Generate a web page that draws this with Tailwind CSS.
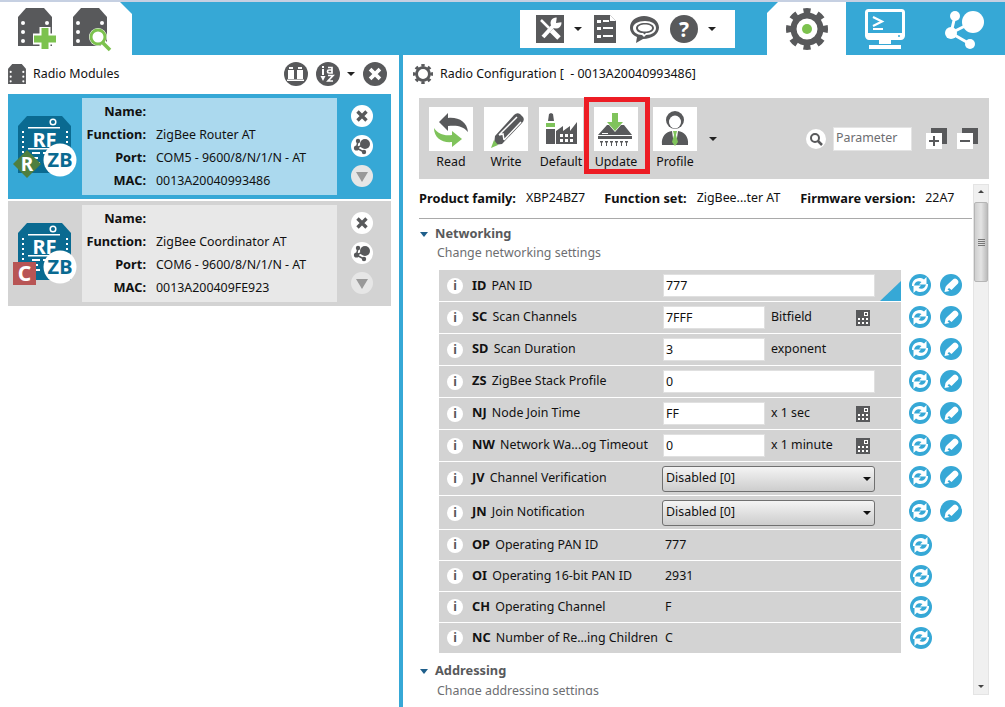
<!DOCTYPE html>
<html lang="en">
<head>
<meta charset="utf-8">
<title>Radio Configuration</title>
<script src="https://cdn.jsdelivr.net/npm/@tailwindcss/browser@4"></script>
</head>
<body class="w-[1005px] h-[707px] overflow-hidden bg-white font-['Noto_Sans',sans-serif] text-[12.4px] text-[#111] [&_b]:text-[12.8px]">
<svg class="absolute w-0 h-0" aria-hidden="true">
  <symbol id="chip" viewBox="0 0 34 38"><path fill="#58595b" d="M8 0H26L34 9V38H0V9Z"/><g fill="#fff"><circle cx="5" cy="15" r="2"/><circle cx="5" cy="24" r="2"/><circle cx="5" cy="33" r="2"/><circle cx="29" cy="15" r="2"/><circle cx="29" cy="24" r="2"/><circle cx="29" cy="33" r="2"/></g></symbol>
  <symbol id="gear" viewBox="0 0 42 42"><circle cx="21" cy="21" r="13.500" fill="none" stroke="#58595b" stroke-width="6"/><circle cx="21" cy="21" r="18" fill="none" stroke="#58595b" stroke-width="6" pathLength="16" stroke-dasharray="1 1" stroke-dashoffset="0.5"/></symbol>
  <symbol id="rf" viewBox="0 0 22 22"><circle cx="11" cy="11" r="11" fill="#36a8d6"/><g fill="#fff"><path d="M3 12C2.500 6 9.500 1.500 15 5.500L17.500 3V10.500H10L12.500 8C9 6 5.500 8 5 12Z"/><path d="M19 10C19.500 16 12.500 20.500 7 16.500L4.500 19V11.500H12L9.500 14C13 16 16.500 14 17 10Z"/></g></symbol>
  <symbol id="wr" viewBox="0 0 22 22"><circle cx="11" cy="11" r="11" fill="#36a8d6"/><path fill="#fff" d="M7 11L13.500 5Q15 4 16.500 5L18 6.500Q19 8 18 9.500L11.500 16L9 14L7.500 15.500L9.500 17L4.500 18L5.500 13Z"/></symbol>
  <symbol id="calc" viewBox="0 0 14 16"><rect width="14" height="16" fill="#58595b"/><path fill="#fff" d="M8 2h4v4H8zM2 8h2v2H2zM6 8h2v2H6zM10 8h2v2h-2zM2 12h2v2H2zM6 12h2v2H6zM10 12h2v2h-2z"/><path fill="#58595b" d="M9 3h2v2H9z"/></symbol>
  <symbol id="xmark" viewBox="0 0 22 22"><path fill="none" stroke="currentColor" stroke-width="3.400" d="M6.500 6.500L15.500 15.500M15.500 6.500L6.500 15.500"/></symbol>
  <symbol id="share" viewBox="0 0 22 22"><g fill="#58595b"><circle cx="14" cy="9" r="5"/><circle cx="7" cy="6" r="2.200"/><circle cx="5.500" cy="13" r="2.600"/><circle cx="13" cy="17" r="2.200"/></g><path fill="none" stroke="#58595b" stroke-width="1.500" d="M7 6L5.500 13L13 17M5.500 13L14 9"/></symbol>
  <symbol id="mod" viewBox="10 105 75 80"><path fill="#0a6a91" d="M27 116H62L71 126V173H18V126Z"/><circle cx="53" cy="122" r="2.800" fill="none" stroke="#fff" stroke-width="1.500"/><path fill="#fff" d="M28 127H60V128.500H28ZM28 148H60V149.500H28ZM32 152H40V154H32ZM32 157H38V159H32ZM32 162H40V164H32ZM43 152H50V154H43Z"/><g fill="#fff"><rect x="22" y="131" width="2" height="2"/><rect x="22" y="136" width="2" height="2"/><rect x="22" y="141" width="2" height="2"/><rect x="22" y="146" width="2" height="2"/><rect x="22" y="151" width="2" height="2"/><rect x="66" y="131" width="2" height="2"/><rect x="66" y="136" width="2" height="2"/><rect x="66" y="141" width="2" height="2"/></g><text x="32.500" y="147" font-size="20" font-weight="700" fill="#fff">RF</text><circle cx="60" cy="160" r="16.500" fill="#fff"/><text x="60" y="167" text-anchor="middle" font-size="20" font-weight="700" fill="#0a6a91">ZB</text></symbol>
</svg>

<header class="h-[55px] border-t-2 border-[#c6d0e2] bg-[#36a8d6] flex">
  <div class="w-[132px] h-[53px] bg-white [clip-path:polygon(0_0,120px_0,132px_12px,132px_100%,0_100%)] flex items-start pl-[18px] pt-[6px] gap-[15px]">
    <svg class="w-[40px] h-[44px]" viewBox="0 0 40 44"><use href="#chip" width="34" height="38"/><path fill="none" stroke="#fff" stroke-width="11" d="M15 31H39M27 19V42"/><path fill="none" stroke="#7cc24e" stroke-width="7" d="M16 31H38M27 20V41"/></svg>
    <svg class="w-[40px] h-[44px]" viewBox="0 0 40 44"><use href="#chip" width="34" height="38"/><circle cx="25" cy="29" r="9" fill="#fff"/><path fill="none" stroke="#fff" stroke-width="7" d="M30 35L37 42"/><circle cx="25" cy="29" r="7" fill="#fff" stroke="#7cc24e" stroke-width="3"/><path fill="none" stroke="#7cc24e" stroke-width="3.600" d="M30 35L37 42"/></svg>
  </div>
  <div class="ml-[388px] mt-[8px] w-[215px] h-[38px] bg-white flex items-center">
    <svg class="ml-[16px] w-[28px] h-[28px]" viewBox="0 0 28 28"><rect width="28" height="28" fill="#58595b"/><g fill="none" stroke="#fff"><path stroke-width="4" d="M7 22L18 10"/><path stroke-width="2.500" d="M5 5L13 13"/><path stroke-width="5" d="M15.500 15.500L23 23"/></g><circle cx="20" cy="8" r="5.500" fill="#fff"/><path fill="#58595b" d="M20 8L21 1H27V7Z"/></svg>
    <span class="ml-[10px] w-0 h-0 border-x-[4px] border-x-transparent border-t-[4px] border-t-[#222]"></span>
    <svg class="ml-[12px] w-[22px] h-[28px]" viewBox="0 0 22 28"><path fill="#58595b" d="M0 0H16L22 6V28H0Z"/><path fill="#fff" d="M16 0L22 6H16Z"/><path fill="#fff" d="M3 5h4v3H3zM9 5h6v2H9zM3 12h4v3H3zM9 12h10v2H9zM3 20h4v3H3zM9 20h10v2H9z"/></svg>
    <svg class="ml-[14px] w-[29px] h-[29px]" viewBox="0 0 29 29"><path fill="#58595b" d="M14 1C6 1 0 6 0 12.500C0 17 3 20.500 7 22L6 28L13 24C22 24 29 19 29 12.500C29 6 22 1 14 1Z"/><path fill="#fff" d="M15 6C8 6 3 9 3 13C3 17 7 20 12 20L14 22L16 20C22 20 26 17 26 13C26 9 22 6 15 6Z"/><path fill="#58595b" d="M15 8C10 8 6 10 6 13C6 16 9 18 13 18L14.500 19.500L16 18C20 18 24 16 24 13C24 10 20 8 15 8Z"/><path fill="#fff" d="M15 9.500C11 9.500 8 11 8 13C8 15 11 16.500 15 16.500C19 16.500 22 15 22 13C22 11 19 9.500 15 9.500Z"/></svg>
    <div class="ml-[11px] w-[28px] h-[28px] rounded-full bg-[#58595b] text-white font-bold text-[21px] leading-[28px] text-center">?</div>
    <span class="ml-[10px] w-0 h-0 border-x-[4px] border-x-transparent border-t-[4px] border-t-[#222]"></span>
  </div>
  <div class="ml-[32px] w-[79px] h-[53px] bg-white [clip-path:polygon(11px_0,100%_0,100%_100%,0_100%,0_11px)] flex justify-center items-start pt-[6px]">
    <svg class="w-[42px] h-[42px]" viewBox="0 0 42 42"><use href="#gear"/><circle cx="21" cy="21" r="5" fill="#7cc24e"/></svg>
  </div>
  <svg class="ml-[19px] mt-[7px] w-[40px] h-[40px]" viewBox="0 0 40 40"><rect x="1.500" y="1.500" width="37" height="27" rx="2" fill="none" stroke="#fff" stroke-width="3"/><path fill="#fff" d="M1 24H39V28Q39 31 36 31H4Q1 31 1 28ZM14 31H26V35H14ZM4 36H36V40H4Z"/><circle cx="34" cy="27" r="1" fill="#36a8d6"/><path fill="none" stroke="#fff" stroke-width="2.200" d="M8 8L17 12.500L8 17M8 20H18"/></svg>
  <svg class="ml-[39px] mt-[8px] w-[41px] h-[40px]" viewBox="0 0 41 40"><g fill="#fff"><circle cx="29" cy="12" r="11"/><circle cx="11" cy="6" r="5"/><circle cx="7" cy="23" r="6"/><circle cx="26" cy="34" r="5"/></g><path fill="none" stroke="#fff" stroke-width="3" d="M11 6L7 23L26 34M7 23L29 12"/></svg>
</header>

<main class="flex h-[652px]">
  <section class="w-[399px]">
    <div class="h-[39px] flex items-center pl-[8px] pr-[12px] pb-[1px]">
      <svg class="w-[18px] h-[20px]" viewBox="0 0 34 38"><use href="#chip" width="34" height="38"/></svg>
      <span class="ml-[7px] mr-auto">Radio Modules</span>
      <div class="w-[24px] h-[24px] rounded-full bg-[#58595b] flex items-center justify-center">
        <svg class="w-[18px] h-[14px]" viewBox="0 0 18 14"><path fill="#fff" d="M1 3h6v9H1zM10 3h6v9h-6zM2 0h4v2H2zM11 0h4v2h-4zM0 12.500h17v1.500H0z"/></svg>
      </div>
      <div class="ml-[8px] w-[24px] h-[24px] rounded-full bg-[#58595b] flex items-center justify-center">
        <svg class="w-[22px] h-[22px]" viewBox="0 0 22 22"><path fill="#fff" d="M5 3h2v2H5zM5 6h2v6H5zM3.500 13h5l-2.500 5z"/><path fill="none" stroke="#fff" stroke-width="1.700" d="M11 4.500h4v5.500h-3a1.500 1.500 0 0 1 0-3h3M11 12.500h5l-5 5.500h5"/></svg>
      </div>
      <span class="ml-[7px] w-0 h-0 border-x-[4px] border-x-transparent border-t-[4px] border-t-[#222]"></span>
      <div class="ml-[8px] w-[24px] h-[24px] rounded-full bg-[#58595b] text-white"><svg class="w-[24px] h-[24px]" viewBox="0 0 22 22"><use href="#xmark"/></svg></div>
    </div>

    <article class="mx-[8px] h-[105px] bg-[#36a8d6] flex items-center">
      <svg class="ml-[2px] w-[72px] h-[80px] -mt-[3px]" viewBox="10 105 72 80"><use href="#mod" x="10" y="105" width="75" height="80"/><path fill="#4f7f3f" d="M27 150L41 164L27 178L13 164Z"/><text x="27" y="170.500" text-anchor="middle" font-size="19" font-weight="700" fill="#fff">R</text></svg>
      <div class="w-[255px] h-[97px] bg-[#abd9ee] grid grid-cols-[64px_1fr] gap-x-[10px] content-center auto-rows-[23px] items-center">
        <b class="text-right">Name:</b><span></span>
        <b class="text-right whitespace-nowrap">Function:</b><span>ZigBee Router AT</span>
        <b class="text-right">Port:</b><span>COM5 - 9600/8/N/1/N - AT</span>
        <b class="text-right">MAC:</b><span>0013A20040993486</span>
      </div>
      <div class="ml-[14px] -mt-[2px] flex flex-col gap-[8px]">
        <div class="w-[22px] h-[22px] rounded-full bg-white text-[#58595b]"><svg class="w-[22px] h-[22px]" viewBox="0 0 22 22"><use href="#xmark"/></svg></div>
        <div class="w-[22px] h-[22px] rounded-full bg-white"><svg class="w-[22px] h-[22px]" viewBox="0 0 22 22"><use href="#share"/></svg></div>
        <div class="w-[22px] h-[22px] rounded-full bg-[#e6e6e6] flex items-center justify-center"><span class="mt-[2px] w-0 h-0 border-x-[6px] border-x-transparent border-t-[10px] border-t-[#999]"></span></div>
      </div>
    </article>

    <article class="mx-[8px] mt-[2px] h-[105px] bg-[#d3d3d3] flex items-center">
      <svg class="ml-[2px] w-[72px] h-[80px] -mt-[3px]" viewBox="10 105 72 80"><use href="#mod" x="10" y="105" width="75" height="80"/><rect x="13" y="155" width="23" height="23" fill="#b85555"/><text x="24.500" y="174" text-anchor="middle" font-size="21" font-weight="700" fill="#fff">C</text></svg>
      <div class="w-[255px] h-[97px] bg-[#e8e8e8] grid grid-cols-[64px_1fr] gap-x-[10px] content-center auto-rows-[23px] items-center">
        <b class="text-right">Name:</b><span></span>
        <b class="text-right whitespace-nowrap">Function:</b><span>ZigBee Coordinator AT</span>
        <b class="text-right">Port:</b><span>COM6 - 9600/8/N/1/N - AT</span>
        <b class="text-right">MAC:</b><span>0013A200409FE923</span>
      </div>
      <div class="ml-[14px] -mt-[2px] flex flex-col gap-[8px]">
        <div class="w-[22px] h-[22px] rounded-full bg-white text-[#58595b]"><svg class="w-[22px] h-[22px]" viewBox="0 0 22 22"><use href="#xmark"/></svg></div>
        <div class="w-[22px] h-[22px] rounded-full bg-white"><svg class="w-[22px] h-[22px]" viewBox="0 0 22 22"><use href="#share"/></svg></div>
        <div class="w-[22px] h-[22px] rounded-full bg-[#e6e6e6] flex items-center justify-center"><span class="mt-[2px] w-0 h-0 border-x-[6px] border-x-transparent border-t-[10px] border-t-[#999]"></span></div>
      </div>
    </article>
  </section>

  <div class="w-[4px] bg-[#36a8d6]"></div>

  <section class="flex-1 min-w-0">
    <div class="h-[43px] flex items-center pl-[10px] pb-[5px]">
      <svg class="w-[20px] h-[20px]" viewBox="0 0 42 42"><use href="#gear"/></svg>
      <span class="ml-[7px] whitespace-pre">Radio Configuration [  - 0013A20040993486]</span>
    </div>

    <div class="relative ml-[16px] w-[570px] h-[81px] bg-[#d3d3d3] flex items-center pl-[10px]">
      <div class="self-start pt-[9px] w-[44px] mr-[11px] flex flex-col items-center">
        <svg class="w-[44px] h-[44px] shrink-0 bg-white" viewBox="0 0 44 44"><path fill="#58595b" d="M10 15L19 6V11C30 10 38 15 39 25C34 19 28 18 19 19V24Z"/><path fill="#7fc35b" d="M5 21C9 27 15 29 23 28V24L33 32L23 40V35C13 36 5 31 5 21Z"/></svg>
        <span class="mt-[2px] leading-[18px] whitespace-nowrap">Read</span>
      </div>
      <div class="self-start pt-[9px] w-[44px] mr-[11px] flex flex-col items-center">
        <svg class="w-[44px] h-[44px] shrink-0 bg-white" viewBox="0 0 44 44"><path fill="#58595b" d="M11 29L30 8Q33 5 36 7L39 10Q41 13 38 16L18 37L10 38Z"/><path fill="none" stroke="#fff" stroke-width="1.500" d="M15 28L33 10M20 33L37 15M15 28L19 27L20 33"/><path fill="#7fc35b" d="M10 33L14 38L7 41Z"/></svg>
        <span class="mt-[2px] leading-[18px] whitespace-nowrap">Write</span>
      </div>
      <div class="self-start pt-[9px] w-[44px] mr-[11px] flex flex-col items-center">
        <svg class="w-[44px] h-[44px] shrink-0 bg-white" viewBox="0 0 44 44"><path fill="#58595b" d="M9 14L10 7L12 6L14 7L15 14ZM7 22H16V37H7ZM17 37V24L24 19V24L31 19V24L38 15V37Z"/><rect x="7" y="16" width="9" height="4" fill="#7fc35b"/><path fill="#fff" d="M21 27h3v3h-3zM26 27h3v3h-3zM31 27h3v3h-3zM21 32h3v3h-3zM26 32h3v3h-3zM31 32h3v3h-3z"/></svg>
        <span class="mt-[2px] leading-[18px] whitespace-nowrap">Default</span>
      </div>
      <div class="self-start pt-[9px] w-[44px] mr-[15px] flex flex-col items-center">
        <svg class="w-[44px] h-[44px] shrink-0 bg-white" viewBox="0 0 44 44"><path fill="#58595b" d="M4 28L13 18H15L21 25L27 18H30L38 28ZM4 29H38V32H4Z"/><path fill="#fff" d="M8 26H14V27H8Z"/><path fill="#7fc35b" d="M18 6H24V15H29L21 24L13 15H18Z"/><path fill="#58595b" d="M6 34h3v1.500h-1v3.500h-1v-3.500h-1zM11 34h3v1.500h-1v3.500h-1v-3.500h-1zM16 34h3v1.500h-1v3.500h-1v-3.500h-1zM21 34h3v1.500h-1v3.500h-1v-3.500h-1zM26 34h3v1.500h-1v3.500h-1v-3.500h-1zM31 34h3v1.500h-1v3.500h-1v-3.500h-1z"/></svg>
        <span class="mt-[2px] leading-[18px] whitespace-nowrap">Update</span>
      </div>
      <div class="self-start pt-[9px] w-[44px] mr-[11px] flex flex-col items-center">
        <svg class="w-[44px] h-[44px] shrink-0 bg-white" viewBox="0 0 44 44"><circle cx="22" cy="13" r="9" fill="#58595b"/><ellipse cx="22" cy="15" rx="6" ry="6.500" fill="#fff"/><path fill="#58595b" d="M9 38C8 29 13 25 19 24L21 38ZM35 38C36 29 31 25 25 24L23 38Z"/><path fill="#7fc35b" d="M20 24H24L23 28L25 35L22 39L19 35L21 28Z"/></svg>
        <span class="mt-[2px] leading-[18px] whitespace-nowrap">Profile</span>
      </div>
      <span class="ml-px w-0 h-0 border-x-[4px] border-x-transparent border-t-[4px] border-t-[#222]"></span>
      <div class="ml-[89px] w-[20px] h-[20px] rounded-full bg-white flex items-center justify-center">
        <svg class="w-[14px] h-[14px]" viewBox="0 0 14 14"><circle cx="6" cy="6" r="4" fill="none" stroke="#58595b" stroke-width="2"/><path stroke="#58595b" stroke-width="2.500" d="M9 9L13 13"/></svg>
      </div>
      <div class="ml-[7px] w-[79px] h-[24px] bg-white border border-[#e4e4e4] pl-[2px] leading-[20px] text-[#6d6e71]">Parameter</div>
      <div class="relative ml-[14px] w-[21px] h-[21px]">
        <div class="absolute right-0 top-0 w-[16px] h-[16px] bg-[#58595b]"></div>
        <div class="absolute left-0 bottom-0 w-[16px] h-[16px] bg-white flex items-center justify-center"><svg class="w-[10px] h-[10px]" viewBox="0 0 10 10"><path fill="#58595b" d="M4 0h2v4h4v2H6v4H4V6H0V4h4z"/></svg></div>
      </div>
      <div class="relative ml-[10px] w-[21px] h-[21px]">
        <div class="absolute right-0 top-0 w-[16px] h-[16px] bg-[#58595b]"></div>
        <div class="absolute left-0 bottom-0 w-[16px] h-[16px] bg-white flex items-center justify-center"><svg class="w-[10px] h-[10px]" viewBox="0 0 10 10"><path fill="#58595b" d="M0 4h10v2H0z"/></svg></div>
      </div>
      <div class="absolute left-[165px] -top-[1px] w-[66px] h-[77px] border-[5px] border-[#ed1c24]"></div>
    </div>

    <div class="flex ml-[16px] mt-[5px] h-[511px]">
      <div class="w-[553px] overflow-hidden">
        <div class="h-[35px] border-b border-[#a9a9a9] flex items-center whitespace-nowrap pb-[5px]">
          <b>Product family:</b><span class="ml-[10px]">XBP24BZ7</span>
          <b class="ml-[19px]">Function set:</b><span class="ml-[10px]">ZigBee...ter AT</span>
          <b class="ml-[20px]">Firmware version:</b><span class="ml-[10px]">22A7</span>
        </div>

        <div class="mt-[5px] h-[20px] flex items-center">
          <span class="ml-px w-0 h-0 border-x-[4px] border-x-transparent border-t-[5px] border-t-[#1f5f8b]"></span>
          <b class="ml-[7px] text-[#58595b]">Networking</b>
        </div>
        <div class="h-[20px] ml-[18px] leading-[18px] text-[#6d6e71]">Change networking settings</div>

        <div class="mt-[6px] ml-[20px] flex flex-col gap-px [&_b]:mr-[2px]">
          <div class="flex items-start">
            <div class="relative w-[462px] h-[31px] bg-[#d3d3d3] flex items-center overflow-hidden">
              <div class="ml-[8px] w-[16px] h-[16px] rounded-full bg-white text-center font-bold leading-[16px] text-[#58595b]">i</div>
              <div class="ml-[9px] w-[191px] whitespace-nowrap"><b>ID</b> PAN ID</div>
              <div class="w-[212px] h-[23px] bg-white border border-[#e0e0e0] pl-[2px] leading-[21px]">777</div>
              <div class="absolute right-0 bottom-0 w-[21px] h-[20px] bg-[#36a8d6] [clip-path:polygon(100%_0,100%_100%,0_100%)]"></div>
            </div>
            <svg class="ml-[8px] mt-[4px] w-[22px] h-[22px]" viewBox="0 0 22 22"><use href="#rf"/></svg>
            <svg class="ml-[9px] mt-[4px] w-[22px] h-[22px]" viewBox="0 0 22 22"><use href="#wr"/></svg>
          </div>
          <div class="flex items-start">
            <div class="w-[462px] h-[31px] bg-[#d3d3d3] flex items-center">
              <div class="ml-[8px] w-[16px] h-[16px] rounded-full bg-white text-center font-bold leading-[16px] text-[#58595b]">i</div>
              <div class="ml-[9px] mb-[2px] w-[191px] whitespace-nowrap"><b>SC</b> Scan Channels</div>
              <div class="w-[102px] h-[23px] bg-white border border-[#e0e0e0] pl-[2px] leading-[21px]">7FFF</div>
              <div class="ml-[6px] w-[85px]">Bitfield</div>
              <svg class="w-[14px] h-[16px]" viewBox="0 0 14 16"><use href="#calc"/></svg>
            </div>
            <svg class="ml-[8px] mt-[4px] w-[22px] h-[22px]" viewBox="0 0 22 22"><use href="#rf"/></svg>
            <svg class="ml-[9px] mt-[4px] w-[22px] h-[22px]" viewBox="0 0 22 22"><use href="#wr"/></svg>
          </div>
          <div class="flex items-start">
            <div class="w-[462px] h-[31px] bg-[#d3d3d3] flex items-center">
              <div class="ml-[8px] w-[16px] h-[16px] rounded-full bg-white text-center font-bold leading-[16px] text-[#58595b]">i</div>
              <div class="ml-[9px] mb-[2px] w-[191px] whitespace-nowrap"><b>SD</b> Scan Duration</div>
              <div class="w-[102px] h-[23px] bg-white border border-[#e0e0e0] pl-[2px] leading-[21px]">3</div>
              <div class="ml-[6px]">exponent</div>
            </div>
            <svg class="ml-[8px] mt-[4px] w-[22px] h-[22px]" viewBox="0 0 22 22"><use href="#rf"/></svg>
            <svg class="ml-[9px] mt-[4px] w-[22px] h-[22px]" viewBox="0 0 22 22"><use href="#wr"/></svg>
          </div>
          <div class="flex items-start">
            <div class="w-[462px] h-[31px] bg-[#d3d3d3] flex items-center">
              <div class="ml-[8px] w-[16px] h-[16px] rounded-full bg-white text-center font-bold leading-[16px] text-[#58595b]">i</div>
              <div class="ml-[9px] mb-[2px] w-[191px] whitespace-nowrap"><b>ZS</b> ZigBee Stack Profile</div>
              <div class="w-[212px] h-[23px] bg-white border border-[#e0e0e0] pl-[2px] leading-[21px]">0</div>
            </div>
            <svg class="ml-[8px] mt-[4px] w-[22px] h-[22px]" viewBox="0 0 22 22"><use href="#rf"/></svg>
            <svg class="ml-[9px] mt-[4px] w-[22px] h-[22px]" viewBox="0 0 22 22"><use href="#wr"/></svg>
          </div>
          <div class="flex items-start">
            <div class="w-[462px] h-[31px] bg-[#d3d3d3] flex items-center">
              <div class="ml-[8px] w-[16px] h-[16px] rounded-full bg-white text-center font-bold leading-[16px] text-[#58595b]">i</div>
              <div class="ml-[9px] mb-[2px] w-[191px] whitespace-nowrap"><b>NJ</b> Node Join Time</div>
              <div class="w-[102px] h-[23px] bg-white border border-[#e0e0e0] pl-[2px] leading-[21px]">FF</div>
              <div class="ml-[6px] w-[85px]">x 1 sec</div>
              <svg class="w-[14px] h-[16px]" viewBox="0 0 14 16"><use href="#calc"/></svg>
            </div>
            <svg class="ml-[8px] mt-[4px] w-[22px] h-[22px]" viewBox="0 0 22 22"><use href="#rf"/></svg>
            <svg class="ml-[9px] mt-[4px] w-[22px] h-[22px]" viewBox="0 0 22 22"><use href="#wr"/></svg>
          </div>
          <div class="flex items-start">
            <div class="w-[462px] h-[31px] bg-[#d3d3d3] flex items-center">
              <div class="ml-[8px] w-[16px] h-[16px] rounded-full bg-white text-center font-bold leading-[16px] text-[#58595b]">i</div>
              <div class="ml-[9px] mb-[2px] w-[191px] whitespace-nowrap"><b>NW</b> Network Wa...og Timeout</div>
              <div class="w-[102px] h-[23px] bg-white border border-[#e0e0e0] pl-[2px] leading-[21px]">0</div>
              <div class="ml-[6px] w-[85px]">x 1 minute</div>
              <svg class="w-[14px] h-[16px]" viewBox="0 0 14 16"><use href="#calc"/></svg>
            </div>
            <svg class="ml-[8px] mt-[4px] w-[22px] h-[22px]" viewBox="0 0 22 22"><use href="#rf"/></svg>
            <svg class="ml-[9px] mt-[4px] w-[22px] h-[22px]" viewBox="0 0 22 22"><use href="#wr"/></svg>
          </div>
          <div class="flex items-start">
            <div class="w-[462px] h-[33px] bg-[#d3d3d3] flex items-center">
              <div class="ml-[8px] w-[16px] h-[16px] rounded-full bg-white text-center font-bold leading-[16px] text-[#58595b]">i</div>
              <div class="ml-[9px] mb-[2px] w-[190px] whitespace-nowrap"><b>JV</b> Channel Verification</div>
              <div class="w-[213px] h-[26px] rounded-[3px] border border-[#707070] bg-linear-to-b from-[#f4f4f4] to-[#cdcdcd] flex items-center justify-between pl-[3px] pr-[3px]"><span>Disabled [0]</span><span class="w-0 h-0 border-x-[4px] border-x-transparent border-t-[4px] border-t-[#111]"></span></div>
            </div>
            <svg class="ml-[8px] mt-[4px] w-[22px] h-[22px]" viewBox="0 0 22 22"><use href="#rf"/></svg>
            <svg class="ml-[9px] mt-[4px] w-[22px] h-[22px]" viewBox="0 0 22 22"><use href="#wr"/></svg>
          </div>
          <div class="flex items-start">
            <div class="w-[462px] h-[33px] bg-[#d3d3d3] flex items-center">
              <div class="ml-[8px] w-[16px] h-[16px] rounded-full bg-white text-center font-bold leading-[16px] text-[#58595b]">i</div>
              <div class="ml-[9px] mb-[2px] w-[190px] whitespace-nowrap"><b>JN</b> Join Notification</div>
              <div class="w-[213px] h-[26px] rounded-[3px] border border-[#707070] bg-linear-to-b from-[#f4f4f4] to-[#cdcdcd] flex items-center justify-between pl-[3px] pr-[3px]"><span>Disabled [0]</span><span class="w-0 h-0 border-x-[4px] border-x-transparent border-t-[4px] border-t-[#111]"></span></div>
            </div>
            <svg class="ml-[8px] mt-[4px] w-[22px] h-[22px]" viewBox="0 0 22 22"><use href="#rf"/></svg>
            <svg class="ml-[9px] mt-[4px] w-[22px] h-[22px]" viewBox="0 0 22 22"><use href="#wr"/></svg>
          </div>
          <div class="flex items-start">
            <div class="w-[462px] h-[30px] bg-[#d3d3d3] flex items-center">
              <div class="ml-[8px] w-[16px] h-[16px] rounded-full bg-white text-center font-bold leading-[16px] text-[#58595b]">i</div>
              <div class="ml-[9px] w-[193px] whitespace-nowrap"><b>OP</b> Operating PAN ID</div>
              <div>777</div>
            </div>
            <svg class="ml-[9px] mt-[4px] w-[22px] h-[22px]" viewBox="0 0 22 22"><use href="#rf"/></svg>
          </div>
          <div class="flex items-start">
            <div class="w-[462px] h-[30px] bg-[#d3d3d3] flex items-center">
              <div class="ml-[8px] w-[16px] h-[16px] rounded-full bg-white text-center font-bold leading-[16px] text-[#58595b]">i</div>
              <div class="ml-[9px] w-[193px] whitespace-nowrap"><b>OI</b> Operating 16-bit PAN ID</div>
              <div>2931</div>
            </div>
            <svg class="ml-[9px] mt-[4px] w-[22px] h-[22px]" viewBox="0 0 22 22"><use href="#rf"/></svg>
          </div>
          <div class="flex items-start">
            <div class="w-[462px] h-[30px] bg-[#d3d3d3] flex items-center">
              <div class="ml-[8px] w-[16px] h-[16px] rounded-full bg-white text-center font-bold leading-[16px] text-[#58595b]">i</div>
              <div class="ml-[9px] w-[193px] whitespace-nowrap"><b>CH</b> Operating Channel</div>
              <div>F</div>
            </div>
            <svg class="ml-[9px] mt-[4px] w-[22px] h-[22px]" viewBox="0 0 22 22"><use href="#rf"/></svg>
          </div>
          <div class="flex items-start">
            <div class="w-[462px] h-[30px] bg-[#d3d3d3] flex items-center">
              <div class="ml-[8px] w-[16px] h-[16px] rounded-full bg-white text-center font-bold leading-[16px] text-[#58595b]">i</div>
              <div class="ml-[9px] w-[193px] whitespace-nowrap"><b>NC</b> Number of Re...ing Children</div>
              <div>C</div>
            </div>
            <svg class="ml-[9px] mt-[4px] w-[22px] h-[22px]" viewBox="0 0 22 22"><use href="#rf"/></svg>
          </div>
        </div>

        <div class="mt-[8px] h-[20px] flex items-center">
          <span class="ml-px w-0 h-0 border-x-[4px] border-x-transparent border-t-[5px] border-t-[#1f5f8b]"></span>
          <b class="ml-[7px] text-[#58595b]">Addressing</b>
        </div>
        <div class="h-[20px] ml-[18px] leading-[19px] text-[#6d6e71]">Change addressing settings</div>
      </div>

      <div class="ml-px w-[16px] bg-[#f0f0f0] border border-[#e4e4e4] flex flex-col items-center">
        <span class="mt-[5px] w-0 h-0 border-x-[3px] border-x-transparent border-b-[3px] border-b-[#444]"></span>
        <div class="mt-[9px] w-[14px] h-[80px] rounded-[2px] bg-linear-to-r from-[#cfcfcf] via-[#e4e4e4] to-[#bdbdbd] border border-[#b5b5b5] flex flex-col items-center justify-center gap-px">
          <i class="block w-[7px] h-px bg-[#777]"></i><i class="block w-[7px] h-px bg-[#777]"></i><i class="block w-[7px] h-px bg-[#777]"></i><i class="block w-[7px] h-px bg-[#777]"></i>
        </div>
        <span class="mt-auto mb-[6px] w-0 h-0 border-x-[3px] border-x-transparent border-t-[3px] border-t-[#444]"></span>
      </div>
    </div>
  </section>
</main>
</body>
</html>
